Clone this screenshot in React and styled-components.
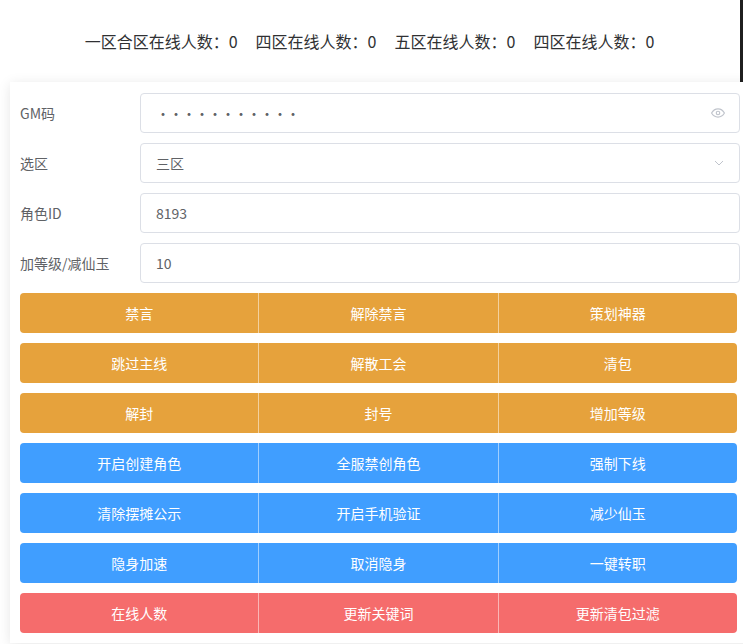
import styled, { createGlobalStyle } from "styled-components";

const Global = createGlobalStyle`
  body { margin: 0; font-family: "Noto Sans CJK SC", "Liberation Sans", sans-serif; background: #fff; overflow: hidden; }
`;

const Page = styled.div`
  position: relative;
  width: 743px;
  height: 644px;
  overflow: hidden;
`;

const Edge = styled.div`
  position: absolute;
  right: 0;
  top: 0;
  width: 3px;
  height: 82px;
  background: #1f1f1f;
`;

const Header = styled.div`
  height: 82px;
  display: flex;
  align-items: center;
  justify-content: center;
  gap: 18px;
  font-size: 16px;
  color: #303133;
  padding-top: 0;
  padding-right: 4px;
`;

const Card = styled.div`
  margin-left: 10px;
  width: 745px;
  padding: 11px 10px 10px 10px;
  box-sizing: border-box;
  box-shadow: 0 2px 12px rgba(0, 0, 0, 0.1);
  display: flex;
  flex-direction: column;
  gap: 10px;
`;

const Row = styled.div`
  display: flex;
  align-items: center;
  height: 40px;
`;

const Label = styled.div`
  width: 120px;
  font-size: 14px;
  color: #606266;
`;

const Field = styled.div`
  width: 600px;
  height: 40px;
  box-sizing: border-box;
  border: 1px solid #dcdfe6;
  border-radius: 4px;
  display: flex;
  align-items: center;
  justify-content: space-between;
  padding: 0 14px 0 15px;
  font-size: 14px;
  color: #606266;
`;

const Group = styled.div`
  display: flex;
  width: 717px;
  height: 40px;
  border-radius: 4px;
  overflow: hidden;
  background: ${(p) => p.$color};
`;

const Btn = styled.div`
  flex: 1;
  display: flex;
  align-items: center;
  justify-content: center;
  color: #fff;
  font-size: 14px;
  & + & { border-left: 1px solid rgba(255, 255, 255, 0.5); }
`;

const groups = [
  ["#e6a23c", ["禁言", "解除禁言", "策划神器"]],
  ["#e6a23c", ["跳过主线", "解散工会", "清包"]],
  ["#e6a23c", ["解封", "封号", "增加等级"]],
  ["#409eff", ["开启创建角色", "全服禁创角色", "强制下线"]],
  ["#409eff", ["清除摆摊公示", "开启手机验证", "减少仙玉"]],
  ["#409eff", ["隐身加速", "取消隐身", "一键转职"]],
  ["#f56c6c", ["在线人数", "更新关键词", "更新清包过滤"]],
];

export default function App() {
  return (
    <Page>
      <Global />
      <Edge />
      <Header>
        <span>一区合区在线人数：0</span>
        <span>四区在线人数：0</span>
        <span>五区在线人数：0</span>
        <span>四区在线人数：0</span>
      </Header>
      <Card>
        <Row>
          <Label>GM码</Label>
          <Field>
            <span style={{ letterSpacing: "-1px" }}>•••••••••••</span>
            <svg width="14" height="14" viewBox="0 0 24 24" fill="none" stroke="#c0c4cc" strokeWidth="2">
              <path d="M1 12s4-7 11-7 11 7 11 7-4 7-11 7S1 12 1 12z" />
              <circle cx="12" cy="12" r="3" />
            </svg>
          </Field>
        </Row>
        <Row>
          <Label>选区</Label>
          <Field>
            <span>三区</span>
            <svg width="12" height="12" viewBox="0 0 24 24" fill="none" stroke="#c0c4cc" strokeWidth="2">
              <path d="M4 8l8 8 8-8" />
            </svg>
          </Field>
        </Row>
        <Row>
          <Label>角色ID</Label>
          <Field>8193</Field>
        </Row>
        <Row>
          <Label>加等级/减仙玉</Label>
          <Field>10</Field>
        </Row>
        {groups.map(([c, items], i) => (
          <Group key={i} $color={c}>
            {items.map((t) => (
              <Btn key={t}>{t}</Btn>
            ))}
          </Group>
        ))}
      </Card>
    </Page>
  );
}
